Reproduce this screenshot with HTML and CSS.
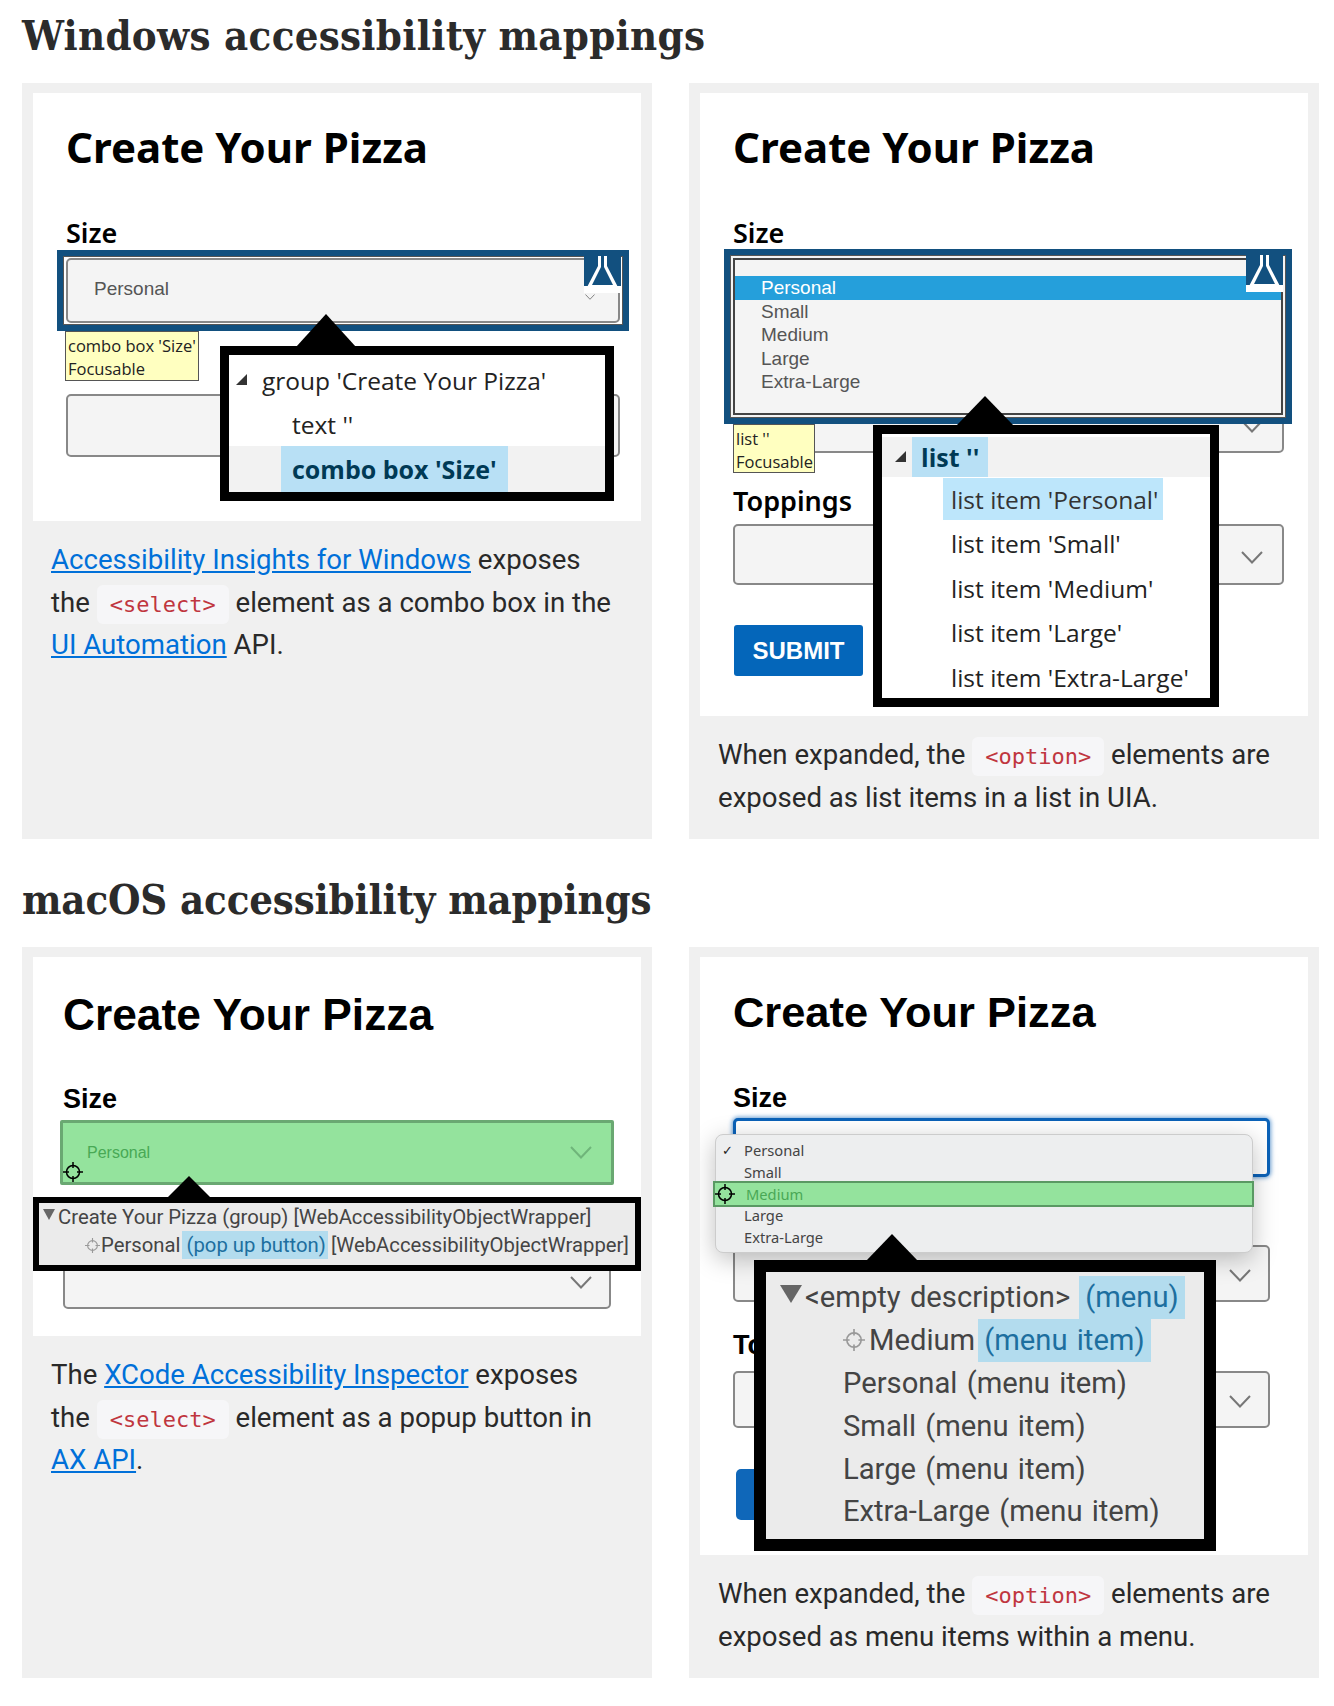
FILE: index.html
```html
<!DOCTYPE html>
<html lang="en">
<head>
  <meta charset="UTF-8">
  <title>Select accessibility mappings</title>
  <link rel="stylesheet" href="styles.css">
</head>
<body>
  <svg class="defs" width="0" height="0">
    <symbol id="chevron" viewBox="0 0 22 13"><path d="M1 1l10 10.500L21 1" fill="none" stroke="currentColor" stroke-width="2"/></symbol>
    <symbol id="flask" viewBox="0 0 37 37"><rect width="37" height="37" fill="#12507f"/><path d="M14 0h3v11L8 29h21L20 11V0h3v10l14 27H0L14 10z" fill="#fff"/><path d="M0 30h37v7H0z" fill="#fff"/></symbol>
    <symbol id="target" viewBox="0 0 20 20"><circle cx="10" cy="10" r="6.500" fill="none" stroke="currentColor" stroke-width="1.500"/><path d="M10 0v6M10 14v6M0 10h6M14 10h6" stroke="currentColor" stroke-width="1.500"/></symbol>
  </svg>

  <h2>Windows accessibility mappings</h2>
  <div class="cards">
    <div class="card">
      <div class="shot shot-win1">
        <div class="form win">
          <h3>Create Your Pizza</h3>
          <div class="label">Size</div>
          <div class="select"><span class="value">Personal</span></div>
          <div class="select select-next"></div>
        </div>
        <div class="ring ring-win1"></div>
        <svg class="flask flask-win1"><use href="#flask"/></svg>
        <svg class="mini-chevron"><use href="#chevron"/></svg>
        <div class="tip tip-win1">combo box 'Size'<br>Focusable</div>
        <div class="arrow arrow-win1"></div>
        <div class="tree tree-win1">
          <div class="row"><span class="twist"></span>group 'Create Your Pizza'</div>
          <div class="row row-in">text ''</div>
          <div class="row row-in row-sel"><span class="hl">combo box 'Size'</span></div>
        </div>
      </div>
      <p><a href="#">Accessibility Insights for Windows</a> exposes the <code>&lt;select&gt;</code> element as a combo box in the <a href="#">UI Automation</a> API.</p>
    </div>

    <div class="card">
      <div class="shot shot-win2">
        <div class="form win">
          <h3>Create Your Pizza</h3>
          <div class="label">Size</div>
          <div class="select select-tall"><svg class="chevron"><use href="#chevron"/></svg></div>
          <div class="label label-top">Toppings</div>
          <div class="select select-short"><svg class="chevron"><use href="#chevron"/></svg></div>
          <button type="button" class="submit">SUBMIT</button>
        </div>
        <div class="ring ring-win2">
          <ul class="listbox">
            <li class="on">Personal</li>
            <li>Small</li>
            <li>Medium</li>
            <li>Large</li>
            <li>Extra-Large</li>
          </ul>
        </div>
        <svg class="flask flask-win2"><use href="#flask"/></svg>
        <div class="tip tip-win2">list ''<br>Focusable</div>
        <div class="arrow arrow-win2"></div>
        <div class="tree tree-win2">
          <div class="row row-head"><span class="twist"></span><span class="hl hl-bold">list ''</span></div>
          <div class="row row-item"><span class="hl hl-light">list item 'Personal'</span></div>
          <div class="row row-item"><span class="plain">list item 'Small'</span></div>
          <div class="row row-item"><span class="plain">list item 'Medium'</span></div>
          <div class="row row-item"><span class="plain">list item 'Large'</span></div>
          <div class="row row-item"><span class="plain">list item 'Extra-Large'</span></div>
        </div>
      </div>
      <p>When expanded, the <code>&lt;option&gt;</code> elements are exposed as list items in a list in UIA.</p>
    </div>
  </div>

  <h2 class="next">macOS accessibility mappings</h2>
  <div class="cards">
    <div class="card">
      <div class="shot shot-mac1">
        <div class="form mac">
          <h3>Create Your Pizza</h3>
          <div class="label">Size</div>
          <div class="select select-green"><span class="value">Personal</span><svg class="chevron"><use href="#chevron"/></svg></div>
          <div class="select select-low"><svg class="chevron"><use href="#chevron"/></svg></div>
        </div>
        <svg class="target target-mac1"><use href="#target"/></svg>
        <div class="arrow arrow-mac1"></div>
        <div class="tree tree-mac1">
          <div class="line"><span class="down"></span>Create Your Pizza (group) [WebAccessibilityObjectWrapper]</div>
          <div class="line line-in"><svg class="target-sm"><use href="#target"/></svg>Personal <span class="mark">(pop up button)</span> [WebAccessibilityObjectWrapper]</div>
        </div>
      </div>
      <p>The <a href="#">XCode Accessibility Inspector</a> exposes the <code>&lt;select&gt;</code> element as a popup button in <a href="#">AX API</a>.</p>
    </div>

    <div class="card">
      <div class="shot shot-mac2">
        <div class="form mac">
          <h3>Create Your Pizza</h3>
          <div class="label">Size</div>
          <div class="select select-focus"></div>
          <div class="select select-second"><svg class="chevron"><use href="#chevron"/></svg></div>
          <div class="label label-to">Toppings</div>
          <div class="select select-third"><svg class="chevron"><use href="#chevron"/></svg></div>
          <button type="button" class="submit submit-mac">SUBMIT</button>
        </div>
        <ul class="menu">
          <li class="checked">Personal</li>
          <li>Small</li>
          <li class="over"><svg class="target target-menu"><use href="#target"/></svg>Medium</li>
          <li>Large</li>
          <li>Extra-Large</li>
        </ul>
        <div class="arrow arrow-mac2"></div>
        <div class="tree tree-mac2">
          <div class="line line-top"><span class="down"></span>&lt;empty description&gt; <span class="mark">(menu)</span></div>
          <div class="line line-in"><svg class="target-sm"><use href="#target"/></svg>Medium <span class="mark">(menu item)</span></div>
          <div class="line line-in">Personal (menu item)</div>
          <div class="line line-in">Small (menu item)</div>
          <div class="line line-in">Large (menu item)</div>
          <div class="line line-in">Extra-Large (menu item)</div>
        </div>
      </div>
      <p>When expanded, the <code>&lt;option&gt;</code> elements are exposed as menu items within a menu.</p>
    </div>
  </div>
</body>
</html>
```

FILE: styles.css
```css
body {
  margin: 0;
  padding: 13px 15px 0 22px;
  font-family: Roboto, "Liberation Sans", sans-serif;
  color: #292929;
  background-color: #fff;
}
.defs {
  position: absolute;
}
h2 {
  margin: 0 0 24px;
  font-family: "DejaVu Serif Condensed", "DejaVu Serif", serif;
  font-size: 41.500px;
  line-height: 46px;
  font-weight: 700;
  letter-spacing: 0.3px;
  color: #2b2b2b;
}
h2.next {
  margin-top: 38px;
  letter-spacing: -0.15px;
}
.cards {
  display: grid;
  grid-template-columns: 630px 630px;
  column-gap: 37px;
}
.card {
  padding: 10px 11px 20px;
  background-color: #f0f0f0;
}
.card p {
  margin: 18px 23px 0 18px;
  font-size: 27.600px;
  line-height: 42.500px;
}
a {
  color: #0070d9;
}
code {
  padding: 7px 13px;
  font-family: "DejaVu Sans Mono", "Liberation Mono", monospace;
  font-size: 22px;
  line-height: 1;
  color: #c0363f;
  background-color: #f6f6f8;
  border-radius: 6px;
}

/* screenshots */
.shot {
  position: relative;
  width: 608px;
  overflow: hidden;
  background-color: #fff;
  color: #000;
}
.shot-win1 { height: 428px; }
.shot-win2 { height: 623px; }
.shot-mac1 { height: 379px; }
.shot-mac2 { height: 598px; }

.form {
  padding: 30px 21px 0 33px;
}
.form h3 {
  margin: 0 0 45px;
  font-size: 41px;
  line-height: 50px;
  font-weight: 700;
  white-space: nowrap;
}
.win {
  padding-top: 29px;
}
.win h3 {
  font-family: "Noto Sans", sans-serif;
  font-size: 42px;
}
.mac h3 {
  font-family: "Liberation Sans", sans-serif;
  font-size: 43.400px;
}
.label {
  margin-bottom: 8px;
  font-size: 27px;
  line-height: 32px;
  font-weight: 700;
}
.win .label {
  margin-bottom: 9px;
  font-family: "Noto Sans", sans-serif;
  font-weight: 600;
}
.mac .label {
  margin-bottom: 4px;
  font-family: "Liberation Sans", sans-serif;
}
.select {
  display: flex;
  align-items: center;
  justify-content: flex-end;
  box-sizing: border-box;
  height: 65px;
  padding: 0 19px 0 26px;
  background-color: #f4f4f4;
  border: 2px solid #888;
  border-radius: 5px;
  font-family: "Liberation Sans", sans-serif;
}
.value {
  margin-right: auto;
  padding-bottom: 3px;
  font-size: 19px;
  color: #555;
}
.chevron {
  width: 22px;
  height: 13px;
  color: #777;
}
.select-next {
  height: 63px;
  margin-top: 71px;
}
.select-tall {
  height: 195px;
  margin-right: 3px;
  align-items: flex-end;
  padding-bottom: 18px;
}
.win .label-top {
  margin-top: 32px;
  margin-bottom: 7px;
}
.select-short {
  height: 61px;
  margin-right: 3px;
  padding-top: 6px;
}
.submit {
  display: block;
  width: 129px;
  height: 51px;
  margin-top: 40px;
  margin-left: 1px;
  padding: 0;
  border: 0;
  border-radius: 3px;
  background-color: #0466ba;
  color: #fff;
  font-family: "Liberation Sans", sans-serif;
  font-size: 24px;
  font-weight: 700;
}
.shot-mac1 .form {
  padding-top: 33px;
  padding-left: 30px;
  padding-right: 30px;
}
.shot-mac1 .form h3 {
  margin-bottom: 43px;
  font-size: 44.300px;
}
.shot-mac1 .label {
  margin-bottom: 5px;
}
.select-green {
  height: 65px;
  background-color: #94e39d;
  border: 3px solid #6aa872;
  border-radius: 2px;
  margin-left: -3px;
  margin-right: -3px;
  padding-left: 24px;
}
.select-green .value {
  font-size: 16px;
  color: #48a955;
  padding-bottom: 0;
}
.select-green .chevron {
  color: #6fb57a;
}
.select-low {
  height: 54px;
  margin-top: 70px;
  padding-right: 17px;
}
.select-focus {
  height: 59px;
  background-color: #fff;
  border: 3px solid #0b62b8;
  box-shadow: 0 0 4px 1px rgba(11, 98, 184, 0.6);
  margin-right: 17px;
}
.select-second {
  height: 57px;
  margin-top: 68px;
  margin-right: 17px;
  padding: 4px 17px 0 26px;
}
.mac .label-to {
  margin-top: 27px;
  margin-bottom: 10px;
}
.select-third {
  height: 57px;
  margin-right: 17px;
  padding: 4px 17px 0 26px;
}
.submit-mac {
  margin-top: 41px;
  margin-left: 3px;
  border-radius: 5px;
  background-color: #0f67b9;
}

/* overlays drawn by the inspectors */
.ring {
  position: absolute;
  box-sizing: border-box;
  border: 6px solid #12507f;
  outline: 1px solid #555;
  outline-offset: -7px;
}
.ring-win1 {
  left: 24px;
  top: 157px;
  width: 572px;
  height: 81px;
}
.ring-win2 {
  left: 24px;
  top: 156px;
  width: 568px;
  height: 175px;
  padding: 3px;
  background-color: #f4f4f4;
}
.listbox {
  box-sizing: border-box;
  height: 100%;
  margin: 0;
  padding: 16px 0 0;
  list-style: none;
  border: 2px solid #444;
  font-family: "Liberation Sans", sans-serif;
  font-size: 19px;
  line-height: 23.600px;
  color: #555;
}
.listbox li {
  padding-left: 26px;
}
.listbox .on {
  background-color: #259fdb;
  color: #fff;
}
.flask {
  position: absolute;
  width: 37px;
  height: 37px;
}
.flask-win1 {
  left: 551px;
  top: 163px;
}
.flask-win2 {
  left: 546px;
  top: 162px;
}
.mini-chevron {
  position: absolute;
  left: 552px;
  top: 201px;
  width: 10px;
  height: 6px;
  color: #777;
}
.tip {
  position: absolute;
  box-sizing: border-box;
  padding: 2px 2px 0;
  background-color: #ffffc0;
  border: 1px solid #555;
  font-family: "Open Sans", sans-serif;
  font-size: 16.500px;
  line-height: 23px;
  white-space: nowrap;
  color: #222;
}
.tip-win1 {
  left: 32px;
  top: 238px;
  width: 134px;
  height: 50px;
}
.tip-win2 {
  left: 33px;
  top: 331px;
  width: 82px;
  height: 49px;
}
.arrow {
  position: absolute;
  width: 0;
  height: 0;
  border-style: solid;
  border-color: transparent transparent #000;
}
.arrow-win1 {
  left: 263px;
  top: 221px;
  border-width: 0 30px 33px;
}
.arrow-win2 {
  left: 256px;
  top: 303px;
  border-width: 0 29px 30px;
}
.arrow-mac1 {
  left: 135px;
  top: 219px;
  border-width: 0 21px 21px;
}
.arrow-mac2 {
  left: 166px;
  top: 277px;
  border-width: 0 26px 27px;
}
.tree {
  position: absolute;
  box-sizing: border-box;
  background-color: #fff;
  border-style: solid;
  border-color: #000;
  font-family: "Open Sans", sans-serif;
  color: #222;
  white-space: nowrap;
}
.tree-win1 {
  left: 187px;
  top: 253px;
  width: 394px;
  height: 155px;
  border-width: 9px;
  padding-top: 3px;
  font-size: 24.500px;
}
.tree-win2 {
  left: 173px;
  top: 332px;
  width: 346px;
  height: 282px;
  border-width: 9px;
  font-size: 24.500px;
}
.tree-win2 .twist {
  left: 13px;
}
.row {
  display: flex;
  align-items: center;
  height: 44px;
  padding-left: 33px;
  position: relative;
}
.row-in {
  padding-left: 63px;
}
.row-sel {
  height: 46px;
  padding-left: 52px;
  background-color: #f2f2f2;
}
.hl {
  display: flex;
  align-items: center;
  align-self: stretch;
  padding: 0 11px;
  background-color: #b8e0f5;
  font-size: 25px;
  font-weight: 700;
  color: #003a55;
}
.row-head {
  height: 40px;
  margin-top: 3px;
  padding-left: 30px;
  background-color: #f2f2f2;
}
.hl-bold {
  padding: 0 9px;
}
.row-item {
  height: 44.500px;
  padding-left: 61px;
}
.hl-light {
  align-self: center;
  height: 42px;
  padding: 0 5px 0 8px;
  background-color: #bde6fb;
  font-size: 24.500px;
  font-weight: 400;
  color: #333;
}
.plain {
  padding-left: 8px;
}
.twist {
  position: absolute;
  left: 7px;
  top: 50%;
  margin-top: -6px;
  width: 0;
  height: 0;
  border-style: solid;
  border-width: 0 0 11px 11px;
  border-color: transparent transparent #333;
}
.tree-mac1 {
  left: 0;
  top: 240px;
  width: 608px;
  height: 74px;
  border-width: 6px;
  background-color: #ebebeb;
  font-family: Roboto, sans-serif;
  font-size: 20.300px;
  color: #444;
}
.tree-mac2 {
  left: 54px;
  top: 303px;
  width: 462px;
  height: 291px;
  border-width: 12px;
  padding-top: 4px;
  background-color: #ebebeb;
  font-family: Roboto, sans-serif;
  font-size: 29.200px;
  word-spacing: 2px;
  color: #444;
}
.line {
  display: flex;
  align-items: center;
  height: 28px;
  padding-left: 12px;
}
.line-in {
  padding-left: 47px;
}
.down {
  width: 0;
  height: 0;
  margin: -6px 3px 0 -8px;
  border-style: solid;
  border-width: 11px 6px 0;
  border-color: #666 transparent transparent;
}
.target-sm {
  width: 15px;
  height: 15px;
  margin: 0 1px 0 -1px;
  color: #999;
}
.mark {
  display: flex;
  align-items: center;
  align-self: stretch;
  margin: 0 3px 0 1px;
  padding: 0 2px 0 5px;
  background-color: #b3dcee;
  color: #1d6f9f;
}
.tree-mac2 .line {
  height: 42.800px;
  padding-left: 38px;
}
.tree-mac2 .line-in {
  padding-left: 77px;
}
.tree-mac2 .down {
  margin: -6px 3px 0 -24px;
  border-width: 18px 11px 0;
}
.tree-mac2 .target-sm {
  width: 22px;
  height: 22px;
  margin-right: 4px;
  margin-left: 0;
}
.tree-mac2 .mark {
  margin: 0 0 0 3px;
  padding: 0 6px;
}
.tree-mac2 .line-top .mark {
  margin-left: 9px;
}
.target {
  position: absolute;
  width: 20px;
  height: 20px;
  color: #000;
}
.target-mac1 {
  left: 30px;
  top: 205px;
}
.menu {
  position: absolute;
  left: 15px;
  top: 177px;
  box-sizing: border-box;
  width: 538px;
  height: 119px;
  margin: 0;
  padding: 5px 0 0;
  list-style: none;
  background-color: #edeeef;
  border: 1px solid #ccc;
  border-radius: 8px;
  box-shadow: 0 6px 24px rgba(0, 0, 0, 0.25);
  font-family: "Noto Sans", sans-serif;
  font-size: 14.700px;
  line-height: 21.700px;
  color: #444;
}
.menu li {
  position: relative;
  padding-left: 28px;
}
.menu .checked::before {
  content: "✓";
  position: absolute;
  left: 6px;
  color: #222;
  font-family: "DejaVu Sans", sans-serif;
  font-size: 13px;
}
.menu .over {
  box-sizing: border-box;
  height: 26px;
  margin: -2px -2px -2px -3px;
  padding-left: 31px;
  line-height: 22px;
  background-color: #94e39d;
  border: 2px solid #5a9963;
  color: #4aa856;
}
.target-menu {
  left: 0;
  top: 1px;
}
```
